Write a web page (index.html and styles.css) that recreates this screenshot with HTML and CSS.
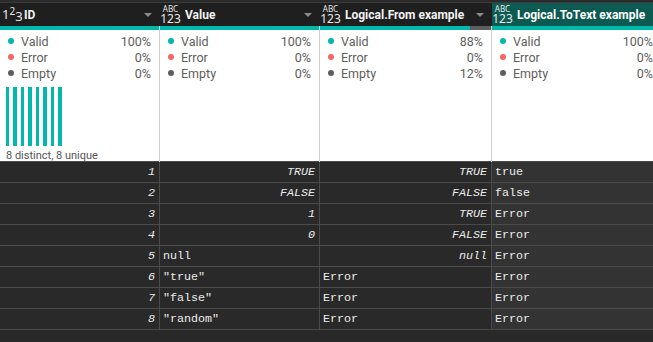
FILE: index.html
```html
<!DOCTYPE html>
<html lang="en">
<head>
    <meta charset="UTF-8">
    <title>Query preview</title>
    <link rel="stylesheet" href="styles.css">
</head>
<body>
    <div class="grid">
        <div class="cols head">
            <div class="col-head">
                <span class="type num">1<span class="sup">2</span><span class="sub">3</span></span>
                <span class="name">ID</span>
                <span class="arrow"></span>
            </div>
            <div class="col-head">
                <span class="type any"><span class="abc">ABC</span><span class="n123">123</span></span>
                <span class="name">Value</span>
                <span class="arrow"></span>
            </div>
            <div class="col-head">
                <span class="type any"><span class="abc">ABC</span><span class="n123">123</span></span>
                <span class="name">Logical.From example</span>
                <span class="arrow"></span>
            </div>
            <div class="col-head selected">
                <span class="type any"><span class="abc">ABC</span><span class="n123">123</span></span>
                <span class="name">Logical.ToText example</span>
            </div>
        </div>

        <div class="cols strips">
            <div class="strip"></div>
            <div class="strip"></div>
            <div class="strip partial"></div>
            <div class="strip"></div>
        </div>

        <div class="cols stats">
            <div class="stat-col">
                <div class="stat"><span class="dot valid"></span><span class="label">Valid</span><span class="pct">100%</span></div>
                <div class="stat"><span class="dot error"></span><span class="label">Error</span><span class="pct">0%</span></div>
                <div class="stat"><span class="dot empty"></span><span class="label">Empty</span><span class="pct">0%</span></div>
                <div class="bars">
                    <span></span><span></span><span></span><span></span>
                    <span></span><span></span><span></span><span></span>
                </div>
                <div class="distinct">8 distinct, 8 unique</div>
            </div>
            <div class="stat-col">
                <div class="stat"><span class="dot valid"></span><span class="label">Valid</span><span class="pct">100%</span></div>
                <div class="stat"><span class="dot error"></span><span class="label">Error</span><span class="pct">0%</span></div>
                <div class="stat"><span class="dot empty"></span><span class="label">Empty</span><span class="pct">0%</span></div>
            </div>
            <div class="stat-col">
                <div class="stat"><span class="dot valid"></span><span class="label">Valid</span><span class="pct">88%</span></div>
                <div class="stat"><span class="dot error"></span><span class="label">Error</span><span class="pct">0%</span></div>
                <div class="stat"><span class="dot empty"></span><span class="label">Empty</span><span class="pct">12%</span></div>
            </div>
            <div class="stat-col">
                <div class="stat"><span class="dot valid"></span><span class="label">Valid</span><span class="pct">100%</span></div>
                <div class="stat"><span class="dot error"></span><span class="label">Error</span><span class="pct">0%</span></div>
                <div class="stat"><span class="dot empty"></span><span class="label">Empty</span><span class="pct">0%</span></div>
            </div>
        </div>

        <div class="rows">
            <div class="cols row"><div class="cell r">1</div><div class="cell r">TRUE</div><div class="cell r">TRUE</div><div class="cell">true</div></div>
            <div class="cols row"><div class="cell r">2</div><div class="cell r">FALSE</div><div class="cell r">FALSE</div><div class="cell">false</div></div>
            <div class="cols row"><div class="cell r">3</div><div class="cell r">1</div><div class="cell r">TRUE</div><div class="cell">Error</div></div>
            <div class="cols row"><div class="cell r">4</div><div class="cell r">0</div><div class="cell r">FALSE</div><div class="cell">Error</div></div>
            <div class="cols row"><div class="cell r">5</div><div class="cell">null</div><div class="cell r">null</div><div class="cell">Error</div></div>
            <div class="cols row"><div class="cell r">6</div><div class="cell">"true"</div><div class="cell">Error</div><div class="cell">Error</div></div>
            <div class="cols row"><div class="cell r">7</div><div class="cell">"false"</div><div class="cell">Error</div><div class="cell">Error</div></div>
            <div class="cols row"><div class="cell r">8</div><div class="cell">"random"</div><div class="cell">Error</div><div class="cell">Error</div></div>
        </div>
    </div>
</body>
</html>
```

FILE: styles.css
```css
:root {
    --teal: #01b8aa;
    --red: #fd625e;
    --grey-dot: #605e5c;
    --head-bg: #1f1f1f;
    --data-bg: #292929;
    --data-bg-sel: #333333;
    --grid-line: #4b4b4b;
    --cell-text: #ececec;
}

* {
    box-sizing: border-box;
}

body {
    margin: 0;
    background-color: #2a2a2a;
    overflow: hidden;
}

.grid {
    width: 653px;
    overflow: hidden;
}

.cols {
    display: grid;
    grid-template-columns: 160px 160px 172px 170px;
}

/* column headers */
.head {
    background-color: var(--head-bg);
    border-top: 1px solid #3c3c3c;
    margin-top: 2px;
    height: 24px;
}

.col-head {
    display: flex;
    align-items: center;
    padding-left: 2px;
    color: #f2f2f2;
    font-family: "Roboto", sans-serif;
    font-weight: 700;
    font-size: 12px;
    white-space: nowrap;
    overflow: hidden;
}

.col-head.selected {
    background-color: #0c5a51;
    color: #ffffff;
}

.type {
    display: inline-flex;
    width: 17px;
    margin-right: 6px;
    color: #e8e8e8;
    font-family: "Noto Sans", sans-serif;
    font-weight: 400;
}

.type.num {
    align-items: center;
    font-size: 13px;
    line-height: 1;
    width: 18px;
    margin-right: 4px;
}

.type.num .sup {
    font-size: 10px;
    position: relative;
    top: -4px;
}

.type.num .sub {
    font-size: 13px;
    position: relative;
    top: 2px;
}

.type.any {
    flex-direction: column;
    align-items: center;
}

.type .abc {
    font-size: 8px;
    line-height: 9px;
}

.type .n123 {
    font-size: 12px;
    line-height: 12px;
}

.name {
    flex: 1;
}

.arrow {
    width: 0;
    height: 0;
    margin-right: 8px;
    border-left: 4px solid transparent;
    border-right: 4px solid transparent;
    border-top: 4px solid #8a8a8a;
}

/* quality strips */
.strips {
    height: 4px;
    background-color: var(--head-bg);
}

.strip {
    background-color: var(--teal);
    border-right: 1px solid #d6d6d6;
}

.strip.partial {
    background: linear-gradient(to right, var(--teal) 88%, #5e5e5e 88%);
}

/* column statistics */
.stats {
    background-color: #ffffff;
    height: 131px;
    font-family: "Roboto", sans-serif;
    font-size: 12.5px;
    color: #605e5c;
}

.stat-col {
    padding: 3px 0 0 0;
    border-right: 1px solid #cfcfcf;
    display: flex;
    flex-direction: column;
}

.stat {
    display: flex;
    align-items: center;
    height: 16px;
    padding: 0 8px 0 8px;
}

.dot {
    width: 6px;
    height: 6px;
    border-radius: 50%;
    margin-right: 7px;
}

.dot.valid { background-color: var(--teal); }
.dot.error { background-color: var(--red); }
.dot.empty { background-color: var(--grey-dot); }

.label {
    flex: 1;
}

.pct {
    text-align: right;
}

.bars {
    display: flex;
    gap: 4.3px;
    height: 59px;
    margin: 6px 0 0 6px;
}

.bars span {
    width: 3.2px;
    background-color: var(--teal);
}

.distinct {
    margin: 3px 0 0 6px;
    font-size: 11px;
    color: #555555;
}

/* data rows */
.rows {
    border-top: 1px solid var(--grid-line);
    background-color: var(--data-bg);
    height: 180px;
}

.row {
    height: 21px;
    border-bottom: 1px solid var(--grid-line);
}

.cell {
    padding: 0 3px;
    line-height: 20px;
    border-right: 1px solid var(--grid-line);
    font-family: "Liberation Mono", monospace;
    font-size: 11.7px;
    color: var(--cell-text);
    white-space: nowrap;
}

.cell:last-child {
    background-color: var(--data-bg-sel);
}

.cell.r {
    text-align: right;
    font-style: italic;
    padding-right: 4px;
}
```
